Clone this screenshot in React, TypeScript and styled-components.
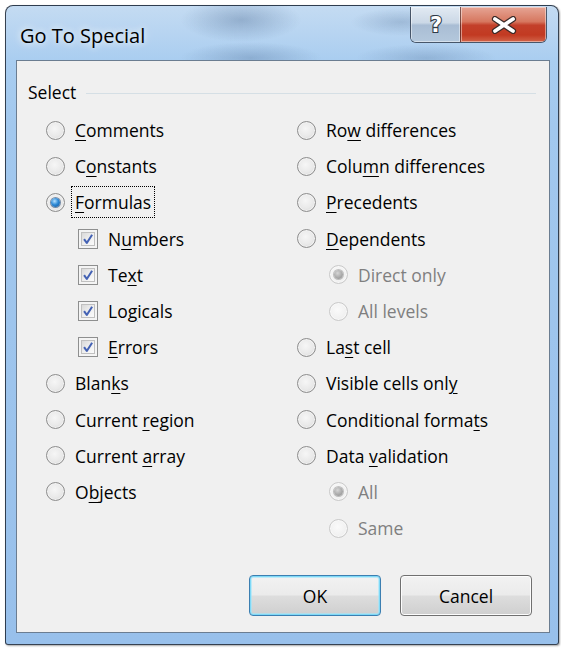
import React from 'react'
import styled, { createGlobalStyle, css } from 'styled-components'

const GlobalStyle = createGlobalStyle`
  html, body { margin: 0; padding: 0; background: #fff; }
  body { font-family: "Open Sans", "Noto Sans", "DejaVu Sans", sans-serif; }
  * { box-sizing: border-box; }
`

type Item = {
  text: string
  key?: number
  kind?: 'radio' | 'check'
  checked?: boolean
  disabled?: boolean
  indent?: boolean
  focus?: boolean
}

const leftItems: Item[] = [
  { text: 'Comments', key: 0 },
  { text: 'Constants', key: 1 },
  { text: 'Formulas', key: 0, checked: true, focus: true },
  { text: 'Numbers', key: 1, kind: 'check', checked: true, indent: true },
  { text: 'Text', key: 2, kind: 'check', checked: true, indent: true },
  { text: 'Logicals', key: 2, kind: 'check', checked: true, indent: true },
  { text: 'Errors', key: 0, kind: 'check', checked: true, indent: true },
  { text: 'Blanks', key: 4 },
  { text: 'Current region', key: 8 },
  { text: 'Current array', key: 8 },
  { text: 'Objects', key: 1 },
]

const rightItems: Item[] = [
  { text: 'Row differences', key: 2 },
  { text: 'Column differences', key: 4 },
  { text: 'Precedents', key: 0 },
  { text: 'Dependents', key: 0 },
  { text: 'Direct only', indent: true, disabled: true, checked: true },
  { text: 'All levels', indent: true, disabled: true },
  { text: 'Last cell', key: 2 },
  { text: 'Visible cells only', key: 17 },
  { text: 'Conditional formats', key: 17 },
  { text: 'Data validation', key: 5 },
  { text: 'All', indent: true, disabled: true, checked: true },
  { text: 'Same', indent: true, disabled: true },
]

const Label = ({ text, k }: { text: string; k?: number }) => {
  if (k === undefined) return <>{text}</>
  return (
    <>
      {text.slice(0, k)}
      <U>{text[k]}</U>
      {text.slice(k + 1)}
    </>
  )
}

const Option = ({ item }: { item: Item }) => (
  <Row $indent={item.indent}>
    {item.kind === 'check' ? (
      <Check>
        <CheckInner>
          {item.checked && (
            <svg width="14" height="14" viewBox="0 0 14 14">
              <path d="M2.4 7.2 L5.6 11.6 L11.8 2" fill="none" stroke="#4462b4" strokeWidth="2.4" strokeLinejoin="round" />
            </svg>
          )}
        </CheckInner>
      </Check>
    ) : (
      <Radio $checked={item.checked} $disabled={item.disabled} />
    )}
    <Text $disabled={item.disabled} $focus={item.focus}>
      <Label text={item.text} k={item.disabled ? undefined : item.key} />
    </Text>
  </Row>
)

export default function App() {
  return (
    <Page>
      <GlobalStyle />
      <Window>
        <TitleBar>
          <Title>Go To Special</Title>
          <Caption>
            <HelpButton>
              <svg width="20" height="24" viewBox="0 0 20 24">
                <text x="10" y="19" textAnchor="middle" fontSize="21" fontWeight="700" fontFamily="'DejaVu Sans', sans-serif" fill="#fff" stroke="#2f3a48" strokeWidth="2.2" paintOrder="stroke">?</text>
              </svg>
            </HelpButton>
            <CloseButton>
              <svg width="26" height="18" viewBox="0 0 26 18">
                <path d="M4 3 L22 15 M22 3 L4 15" stroke="#3b2a28" strokeWidth="6.2" strokeLinecap="round" />
                <path d="M4 3 L22 15 M22 3 L4 15" stroke="#fff" strokeWidth="3.8" strokeLinecap="round" />
              </svg>
            </CloseButton>
          </Caption>
        </TitleBar>
        <Client>
          <GroupHeader>
            <span>Select</span>
            <GroupLine />
          </GroupHeader>
          <Columns>
            <Column>
              {leftItems.map((it) => <Option key={it.text} item={it} />)}
            </Column>
            <Column>
              {rightItems.map((it) => <Option key={it.text} item={it} />)}
            </Column>
          </Columns>
          <Footer>
            <Button $default>OK</Button>
            <Button>Cancel</Button>
          </Footer>
        </Client>
      </Window>
    </Page>
  )
}

const Page = styled.div`
  width: 561px;
  height: 648px;
  padding: 5px 2px 3px 5px;
  background: #fff;
`

const Window = styled.div`
  height: 640px;
  display: flex;
  flex-direction: column;
  border: 1px solid rgba(20, 28, 40, 0.8);
  border-radius: 8px 8px 3px 3px;
  background:
    radial-gradient(ellipse 60px 22px at 235px 14px, rgba(70, 100, 140, 0.35), transparent),
    radial-gradient(ellipse 70px 16px at 245px 52px, rgba(70, 100, 140, 0.3), transparent),
    radial-gradient(ellipse 50px 14px at 395px 16px, rgba(70, 100, 140, 0.25), transparent),
    radial-gradient(ellipse 70px 14px at 420px 52px, rgba(70, 100, 140, 0.25), transparent),
    linear-gradient(to bottom, #c4dbf2 0, #a9cdf0 56px, #a2c8ee 120px, #98c0eb 100%);
  box-shadow: 1px 1px 2px rgba(0, 0, 0, 0.35);
`

const TitleBar = styled.div`
  height: 54px;
  display: flex;
  align-items: flex-start;
  justify-content: space-between;
  padding: 0 11px 0 14px;
`

const Title = styled.div`
  padding-top: 17px;
  font-size: 20px;
  line-height: 26px;
  color: #000;
  text-shadow: 0 0 6px rgba(255, 255, 255, 0.9), 0 0 12px rgba(255, 255, 255, 0.6);
`

const Caption = styled.div`
  display: flex;
  height: 36px;
  margin-top: 1px;
  border: 1px solid rgba(35, 45, 60, 0.75);
  border-top: none;
  border-radius: 0 0 6px 6px;
  overflow: hidden;
`

const captionButton = css`
  display: flex;
  align-items: center;
  justify-content: center;
  box-shadow: inset 0 0 0 1px rgba(255, 255, 255, 0.45);
`

const HelpButton = styled.div`
  ${captionButton};
  width: 49px;
  background: linear-gradient(to bottom, #e2eaf3 0, #cbd8e6 45%, #a9bdd4 52%, #b4c8dc 100%);
`

const CloseButton = styled.div`
  ${captionButton};
  width: 86px;
  border-left: 1px solid rgba(60, 40, 40, 0.6);
  background: linear-gradient(to bottom, #e6a595 0, #d6775f 42%, #c3402a 52%, #c23a22 80%, #d1644a 100%);
`

const Client = styled.div`
  flex: 1;
  display: flex;
  flex-direction: column;
  margin: 0 8px 11px 10px;
  border: 1px solid #6b7d91;
  background: #f0f0f0;
  padding: 19px 17px 16px 11px;
`

const GroupHeader = styled.div`
  display: flex;
  align-items: center;
  gap: 10px;
  height: 24px;
  font-size: 17.5px;
  color: #000;
  margin-right: -4px;
`

const GroupLine = styled.div`
  flex: 1;
  height: 1px;
  background: #d5dfe5;
  margin-top: 2px;
`

const Columns = styled.div`
  display: grid;
  grid-template-columns: 251px 1fr;
  padding: 8px 0 0 18px;
`

const Column = styled.div`
  display: flex;
  flex-direction: column;
`

const Row = styled.div<{ $indent?: boolean }>`
  height: 36.2px;
  display: flex;
  align-items: center;
  gap: 10px;
  padding-left: ${(p) => (p.$indent ? '32px' : '0')};
`

const Radio = styled.span<{ $checked?: boolean; $disabled?: boolean }>`
  position: relative;
  flex: none;
  width: 19px;
  height: 19px;
  border-radius: 50%;
  border: 1px solid ${(p) => (p.$disabled ? '#c9c9c9' : '#8d8d8d')};
  background: ${(p) =>
    p.$disabled
      ? 'radial-gradient(circle at 45% 40%, #fafafa 0, #f1f1f1 60%, #e6e6e6 100%)'
      : 'radial-gradient(circle at 45% 40%, #f6f6f6 0, #e9e9e9 55%, #cfcfcf 100%)'};
  box-shadow: inset 0 0 0 1px ${(p) => (p.$disabled ? '#f8f8f8' : '#f2f2f2')};
  &::after {
    content: '';
    display: ${(p) => (p.$checked ? 'block' : 'none')};
    position: absolute;
    left: 4px;
    top: 4px;
    width: 9px;
    height: 9px;
    border-radius: 50%;
    background: ${(p) =>
      p.$disabled
        ? 'radial-gradient(circle at 40% 35%, #d6d6d6 0, #a6a6a6 60%, #8e8e8e 100%)'
        : 'radial-gradient(circle at 40% 35%, #b7e2ff 0, #2f8ad6 45%, #0c4f93 100%)'};
    box-shadow: 0 0 0 1px ${(p) => (p.$disabled ? 'rgba(140,140,140,.5)' : 'rgba(20,60,110,.55)')};
  }
`

const Check = styled.span`
  flex: none;
  width: 20px;
  height: 20px;
  border: 1px solid #8e8f8f;
  background: #f4f4f4;
  padding: 2px;
`

const CheckInner = styled.span`
  display: flex;
  align-items: center;
  justify-content: center;
  width: 100%;
  height: 100%;
  border: 1px solid #c0c0c0;
  background: linear-gradient(135deg, #d9d9d9 0, #eeeeee 50%, #fbfbfb 100%);
`

const Text = styled.span<{ $disabled?: boolean; $focus?: boolean }>`
  font-size: 17.5px;
  line-height: 24px;
  white-space: nowrap;
  color: ${(p) => (p.$disabled ? '#7f7f7f' : '#000')};
  ${(p) =>
    p.$focus &&
    css`
      margin-left: -3px;
      padding: 3px 3px;
      outline: 1px dotted #000;
    `}
`

const U = styled.span`
  text-decoration: underline;
  text-underline-offset: 3px;
`

const Footer = styled.div`
  margin-top: auto;
  display: flex;
  justify-content: flex-end;
  gap: 19px;
`

const Button = styled.div<{ $default?: boolean }>`
  width: 132px;
  height: 41px;
  display: flex;
  align-items: center;
  justify-content: center;
  font-size: 17.5px;
  color: #000;
  border-radius: 4px;
  border: 1px solid ${(p) => (p.$default ? '#3c7fb1' : '#707070')};
  box-shadow: inset 0 0 0 1px ${(p) => (p.$default ? '#7fd9f7' : '#fcfcfc')},
    inset 0 0 0 2px ${(p) => (p.$default ? 'rgba(160, 230, 252, 0.6)' : 'transparent')};
  background: linear-gradient(to bottom, #f2f2f2 0, #ebebeb 48%, #dddddd 52%, #cfcfcf 100%);
`
